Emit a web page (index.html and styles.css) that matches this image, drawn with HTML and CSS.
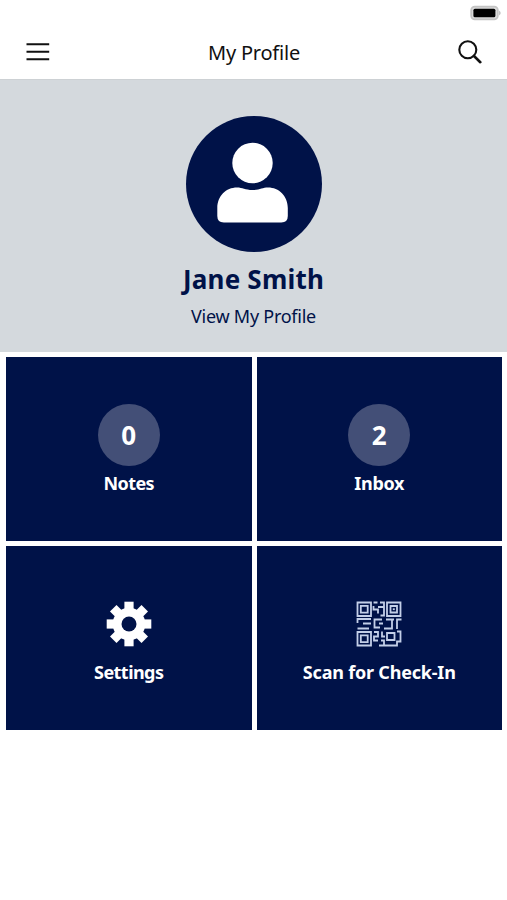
FILE: index.html
```html
<!DOCTYPE html>
<html lang="en">
<head>
    <meta charset="UTF-8">
    <meta name="viewport" content="width=device-width, initial-scale=1.0">
    <title>My Profile</title>
    <link rel="stylesheet" href="styles.css">
</head>
<body>
    <!-- Status bar -->
    <div class="status-bar">
        <svg width="32" height="16" viewBox="0 0 32 16">
            <rect x="1.2" y="1.7" width="26.6" height="12.6" rx="3.6" fill="#ddd" stroke="#c4c4c4" stroke-width="1.8"/>
            <rect x="3.4" y="3.7" width="22" height="8.6" rx="1.5" fill="#000"/>
            <path d="M29.2 5.5 Q32 8 29.2 10.5 Z" fill="#b5b5b5"/>
        </svg>
    </div>

    <!-- Header -->
    <header class="header">
        <button class="icon-btn" aria-label="Menu">
            <svg width="24" height="20" viewBox="0 0 24 20">
                <path d="M.5 2.3H23.2M.5 9.8H23.2M.5 17.3H23.2" stroke="#111" stroke-width="2.1"/>
            </svg>
        </button>
        <h1 class="title">My Profile</h1>
        <button class="icon-btn" aria-label="Search">
            <svg width="24" height="25" viewBox="0 0 24 25" fill="none" stroke="#111" stroke-linecap="round">
                <circle cx="9.8" cy="9.8" r="8.5" stroke-width="2.1"/>
                <path d="M16 16L22.3 22.2" stroke-width="2.6"/>
            </svg>
        </button>
    </header>

    <!-- Profile -->
    <section class="profile">
        <div class="avatar">
            <svg width="136" height="136" viewBox="0 0 136 136" fill="#fff">
                <circle cx="66.5" cy="47" r="20.2"/>
                <path d="M31.3 92C31.3 80 40 71.5 51 71.5C56.5 71.5 59 74 66.5 74C74 74 76.5 71.5 82 71.5C93 71.5 101.8 80 101.8 92V100Q101.8 106.5 95.3 106.5H37.8Q31.3 106.5 31.3 100Z"/>
            </svg>
        </div>
        <h2 class="name">Jane Smith</h2>
        <a class="profile-link">View My Profile</a>
    </section>

    <!-- Tiles -->
    <main class="tiles">
        <div class="tile">
            <span class="count">0</span>
            <span class="label">Notes</span>
        </div>
        <div class="tile">
            <span class="count">2</span>
            <span class="label label-inbox">Inbox</span>
        </div>
        <div class="tile tile-icon">
            <svg width="46" height="46" viewBox="-23 -23 46 46">
                <g fill="#fff">
                    <rect x="-4.6" y="-22.3" width="9.2" height="44.6"/>
                    <rect x="-4.6" y="-22.3" width="9.2" height="44.6" transform="rotate(45)"/>
                    <rect x="-4.6" y="-22.3" width="9.2" height="44.6" transform="rotate(90)"/>
                    <rect x="-4.6" y="-22.3" width="9.2" height="44.6" transform="rotate(135)"/>
                    <circle r="16.3"/>
                </g>
                <circle r="7.5" fill="#001248"/>
            </svg>
            <span class="label">Settings</span>
        </div>
        <div class="tile tile-icon">
            <svg width="46" height="46" viewBox="0 0 46 46" fill="none" stroke="#c3cfe8" stroke-width="1.8">
                <!-- finder squares -->
                <path d="M1.5 1.5H15V15H1.5ZM31 1.5H44.5V15H31ZM1.5 31H15V44.5H1.5Z"/>
                <path d="M4.8 4.8H11.7V11.7H4.8ZM34.5 5H41V11.5H34.5ZM4.8 34.3H11.7V41.2H4.8Z"/>
                <path d="M36.8 8.2H38.8"/>
                <!-- data cells -->
                <path d="M17.5 1.5H21.5M17.5 5V8.5H22V12.5M22 6H27.5M24 1.5H28V14.5H24.5"/>
                <path d="M1.5 22V18H15M1.5 27.5H13M7 22.5H15M26 18.5H18.5V26.5H24M27 22.5H23M28 27.5H36V18.5M30 18.5H38M41 28V18.5H45.5"/>
                <path d="M18 31H22V35.5H18V39.5H22M26 30.5V35.500H29M31 32H38.500V39H31ZM41 30.500H44.500V40.500H41V44.500H23M25 39.500H28V44.500"/>
            </svg>
            <span class="label label-scan">Scan for Check-In</span>
        </div>
    </main>
</body>
</html>
```

FILE: styles.css
```css
* {
    box-sizing: border-box;
}

body {
    margin: 0;
    background: #fff;
    font-family: "Noto Sans", "Open Sans", sans-serif;
    color: #001248;
}

.status-bar {
    display: flex;
    justify-content: flex-end;
    height: 25px;
    padding: 5px 5px 0 0;
}

.header {
    display: flex;
    align-items: center;
    justify-content: space-between;
    height: 54px;
    padding: 0 25px 0 26px;
}

.icon-btn {
    display: flex;
    padding: 0;
    border: none;
    background: none;
}

.title {
    margin: 0;
    padding-top: 2px;
    font-size: 20px;
    font-weight: 400;
    letter-spacing: -0.2px;
    line-height: 28px;
    color: #111;
}

.profile {
    display: flex;
    flex-direction: column;
    align-items: center;
    height: 273px;
    padding-top: 36px;
    border-top: 1px solid #cdd1d4;
    background: #d4d9dd;
}

.avatar {
    width: 136px;
    height: 136px;
    border-radius: 50%;
    background: #001248;
}

.name {
    margin: 9px 0 0;
    font-size: 26px;
    font-weight: 700;
    letter-spacing: 0.2px;
    line-height: 36px;
}

.profile-link {
    margin-top: 7px;
    font-size: 18px;
    letter-spacing: -0.25px;
    line-height: 24px;
}

.tiles {
    display: grid;
    grid-template-columns: 1fr 1fr;
    grid-auto-rows: 184px;
    gap: 5px;
    padding: 5px 5px 0 6px;
}

.tile {
    display: flex;
    flex-direction: column;
    align-items: center;
    padding-top: 47px;
    background: #001248;
    color: #fff;
}

.tile-icon {
    padding-top: 55px;
}

.count {
    width: 62px;
    height: 62px;
    border-radius: 50%;
    background: #434f77;
    font-size: 26px;
    font-weight: 700;
    line-height: 62px;
    text-align: center;
}

.label {
    margin-top: 5px;
    font-size: 18px;
    font-weight: 700;
    letter-spacing: -0.55px;
    line-height: 24px;
}

.label-scan {
    letter-spacing: -0.2px;
}

.label-inbox {
    letter-spacing: -0.3px;
}

.tile-icon .label {
    margin-top: 13px;
}
```
